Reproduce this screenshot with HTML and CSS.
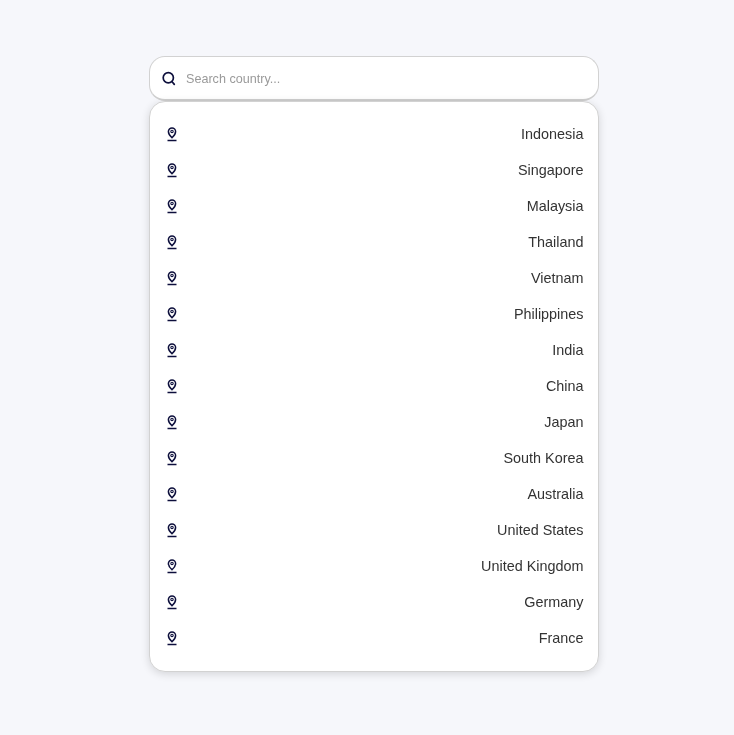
FILE: index.html
```html
<!DOCTYPE html>
<html lang="en">
<head>
    <meta charset="UTF-8">
    <meta name="viewport" content="width=device-width, initial-scale=1.0">
    <title>Search Country</title>
    <link rel="stylesheet" href="styles.css">
</head>
<body>
    <svg class="icon-defs" width="0" height="0" aria-hidden="true">
        <symbol id="pin" viewBox="0 0 10 15">
            <path d="M5 .9A3.600 3.600 0 0 0 1.400 4.500C1.400 6.800 3.400 9.300 5 10.700 6.600 9.300 8.600 6.800 8.600 4.500A3.600 3.600 0 0 0 5 .9z" fill="none" stroke="#0d0f3c" stroke-width="1.500"/>
            <circle cx="5" cy="4.400" r="1.200" fill="none" stroke="#0d0f3c" stroke-width="1.100"/>
            <path d="M.5 13.500h9" fill="none" stroke="#0d0f3c" stroke-width="1.500"/>
        </symbol>
    </svg>
    <div class="container">
        <div class="search-box">
            <svg class="search-icon" viewBox="0 0 15 15" aria-hidden="true">
                <circle cx="6.300" cy="6.800" r="5.100" fill="none" stroke="#0d0f3c" stroke-width="1.700"/>
                <path d="M10.300 11 12.300 13.400" fill="none" stroke="#0d0f3c" stroke-width="1.700" stroke-linecap="round"/>
            </svg>
            <input type="text" class="search-input" placeholder="Search country...">
        </div>
        <ul class="country-list">
            <li class="country"><svg class="pin-icon"><use href="#pin"/></svg><span>Indonesia</span></li>
            <li class="country"><svg class="pin-icon"><use href="#pin"/></svg><span>Singapore</span></li>
            <li class="country"><svg class="pin-icon"><use href="#pin"/></svg><span>Malaysia</span></li>
            <li class="country"><svg class="pin-icon"><use href="#pin"/></svg><span>Thailand</span></li>
            <li class="country"><svg class="pin-icon"><use href="#pin"/></svg><span>Vietnam</span></li>
            <li class="country"><svg class="pin-icon"><use href="#pin"/></svg><span>Philippines</span></li>
            <li class="country"><svg class="pin-icon"><use href="#pin"/></svg><span>India</span></li>
            <li class="country"><svg class="pin-icon"><use href="#pin"/></svg><span>China</span></li>
            <li class="country"><svg class="pin-icon"><use href="#pin"/></svg><span>Japan</span></li>
            <li class="country"><svg class="pin-icon"><use href="#pin"/></svg><span>South Korea</span></li>
            <li class="country"><svg class="pin-icon"><use href="#pin"/></svg><span>Australia</span></li>
            <li class="country"><svg class="pin-icon"><use href="#pin"/></svg><span>United States</span></li>
            <li class="country"><svg class="pin-icon"><use href="#pin"/></svg><span>United Kingdom</span></li>
            <li class="country"><svg class="pin-icon"><use href="#pin"/></svg><span>Germany</span></li>
            <li class="country"><svg class="pin-icon"><use href="#pin"/></svg><span>France</span></li>
        </ul>
    </div>
</body>
</html>
```
FILE: styles.css
```css
body {
    font-family: "Liberation Sans", Arial, sans-serif;
    background-color: #f6f7fb;
    margin: 0;
    height: 100vh;
    padding: 0 0 8px 14px;
    box-sizing: border-box;
    display: flex;
    justify-content: center;
    align-items: center;
}

.icon-defs {
    position: absolute;
}

.container {
    width: 450px;
    will-change: transform;
}

.search-box {
    display: flex;
    align-items: center;
    gap: 9px;
    height: 45px;
    padding: 2px 12px 0;
    box-sizing: border-box;
    background: white;
    border: 1px solid #d2d2d2;
    border-bottom: 2px solid #cfcfcf;
    border-radius: 16px;
}

.search-icon {
    width: 15px;
    height: 15px;
    margin-top: -1px;
    flex-shrink: 0;
}

.search-input {
    flex: 1;
    border: none;
    outline: none;
    padding: 0;
    font-family: inherit;
    font-size: 12.6px;
    color: #333;
}

.search-input::placeholder {
    color: #9a9a9a;
}

.country-list {
    list-style: none;
    margin: 0;
    padding: 14px 14.5px 15px 17px;
    background: white;
    border: 1px solid #d2d2d2;
    border-radius: 16px;
    box-shadow: 0 2px 8px rgba(0, 0, 0, 0.14);
}

.country {
    display: flex;
    justify-content: space-between;
    align-items: center;
    height: 36px;
    font-size: 14.4px;
    color: #333;
}

.pin-icon {
    width: 10px;
    height: 15px;
}
```
